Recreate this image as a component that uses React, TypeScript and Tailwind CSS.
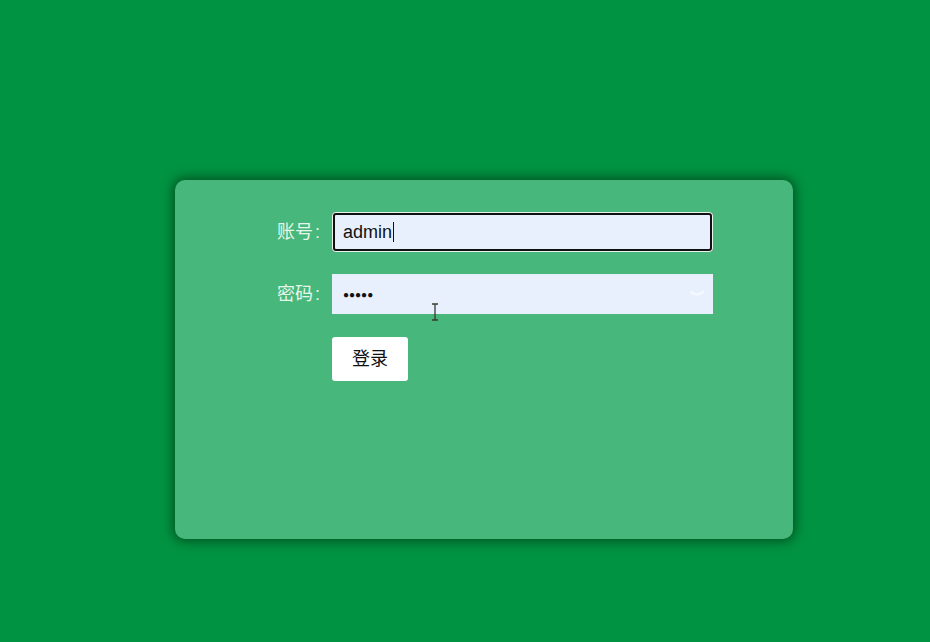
import React from "react";

export default function App() {
  return (
    <div
      className="relative min-h-[642px] w-full bg-[#009342] pt-[180px] pl-[175px]"
      style={{ fontFamily: '"Liberation Sans", "Noto Sans CJK SC", sans-serif' }}
    >
      <div className="h-[359px] w-[618px] rounded-[10px] bg-[#48b77b] pt-[32px] shadow-[0_0_12px_2px_rgba(0,35,10,0.6)]">
        <div className="grid grid-cols-[145px_381px] gap-x-[12px]">
          {/* row 1 */}
          <div className="flex h-[40px] items-center justify-end text-[18px] text-[#e6f6ea]">
            账号<span className="ml-[2px]">:</span>
          </div>
          <div className="flex h-[40px] items-center rounded-[4px] bg-[#e8f0fe] pl-[11px] text-[18px] text-[#111] shadow-[inset_0_0_0_1px_#e8f5ec,inset_0_0_0_3px_#111]">
            <span>admin</span>
            <span className="ml-[1px] inline-block h-[20px] w-[1px] bg-[#111]" />
          </div>

          {/* row 2 */}
          <div className="mt-[22px] flex h-[40px] items-center justify-end text-[18px] text-[#e6f6ea]">
            密码<span className="ml-[2px]">:</span>
          </div>
          <div className="relative mt-[22px] flex h-[40px] items-center bg-[#e8f0fe] pl-[11px] text-[18px] text-[#111]">
            <span className="text-[10px] tracking-[0px]">●●●●●</span>
            <svg className="absolute right-[8px] top-[16px]" width="16" height="8" viewBox="0 0 16 8">
              <path d="M2 2 Q8 7 14 2" fill="none" stroke="#ffffff" strokeOpacity="0.55" strokeWidth="2.5" strokeLinecap="round" />
            </svg>
          </div>

          {/* row 3 */}
          <div className="mt-[23px]" />
          <div className="mt-[23px]">
            <button className="h-[44px] w-[76px] rounded-[3px] bg-white text-[18px] text-[#111]">登录</button>
          </div>
        </div>
      </div>

      {/* mouse I-beam cursor */}
      <svg className="absolute left-[430px] top-[303px]" width="10" height="18" viewBox="0 0 10 18">
        <path d="M2 1 H8 M5 1 V17 M2 17 H8" fill="none" stroke="#3a3a2e" strokeWidth="1.3" />
      </svg>
    </div>
  );
}
